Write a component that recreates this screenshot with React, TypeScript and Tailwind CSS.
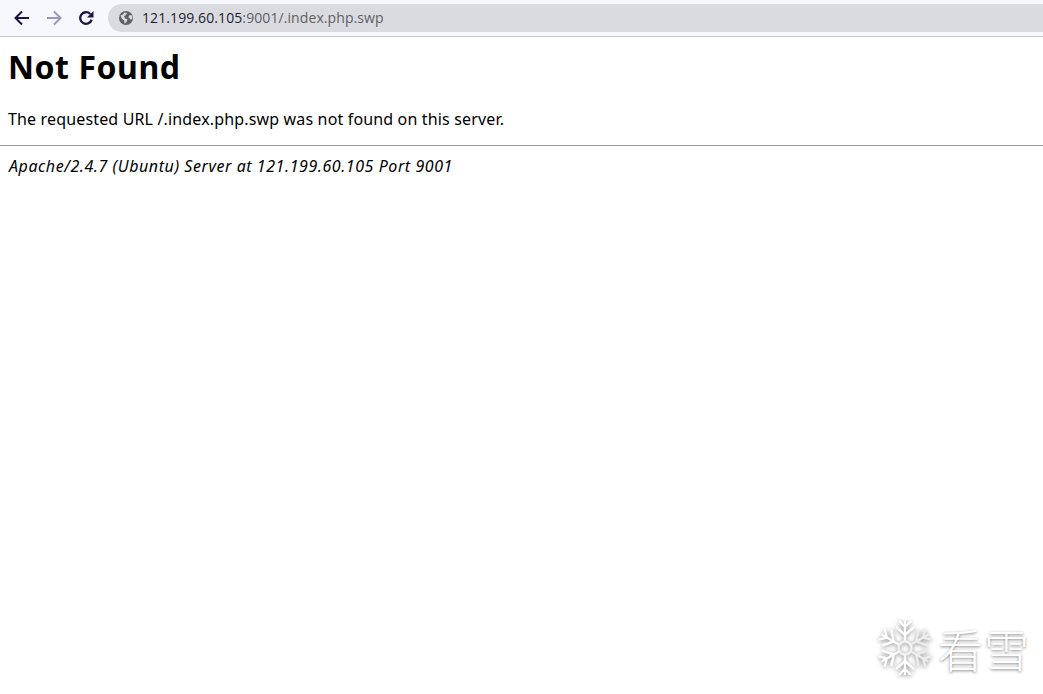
import React from "react";

function Back({ color }: { color: string }) {
  return (
    <svg width="16" height="16" viewBox="0 0 16 16" fill="none" stroke={color} strokeWidth="2">
      <path d="M15 8H2M8 1.5 1.5 8 8 14.5" />
    </svg>
  );
}

function Forward({ color }: { color: string }) {
  return (
    <svg width="16" height="16" viewBox="0 0 16 16" fill="none" stroke={color} strokeWidth="2">
      <path d="M1 8h13M8 1.5 14.5 8 8 14.5" />
    </svg>
  );
}

function Reload() {
  return (
    <svg width="16" height="16" viewBox="0 0 16 16" fill="none">
      <path d="M13.6 9.6A5.8 5.8 0 1 1 12.2 4" stroke="#1a1446" strokeWidth="2.3" />
      <path d="M15.5 1v6.6H8.9z" fill="#1a1446" />
    </svg>
  );
}

function Globe() {
  return (
    <svg width="14" height="14" viewBox="0 0 14 14">
      <circle cx="7" cy="7" r="7" fill="#5f6064" />
      <path d="M1.5 4.5 4 3.5l1.5-2L8 2 7 4 5 5l1 2.5 2.5.8-1 2.8-1.7 1.4L5 9.5 2.8 7.6z" fill="#dadbe0" />
      <path d="M10 4.5l2.6-.5.9 3-1.5 2-1-1.5-1.5-1z" fill="#dadbe0" />
    </svg>
  );
}

function Snowflake() {
  const arm = "M28 22V1M28 7l-6-6M28 7l6-6M28 15l-9-8M28 15l9-8";
  return (
    <svg width="56" height="60" viewBox="0 0 56 60" fill="none" strokeWidth="2.4" className="drop-shadow-[0_1px_2px_rgba(0,0,0,0.45)]">
      <g transform="translate(0 2)">
        {[0, 60, 120, 180, 240, 300].map((r) => (
          <path key={r} d={arm} transform={`rotate(${r} 28 28)`} stroke={r === 60 || r === 120 ? "#ececec" : "#ffffff"} />
        ))}
        <circle cx="28" cy="28" r="6.5" stroke="#f2f2f2" />
      </g>
    </svg>
  );
}

export default function App() {
  return (
    <div className="h-[694px] w-[1043px] overflow-hidden bg-white relative font-['Noto_Sans','Open_Sans',sans-serif] text-black">
      <header className="h-[37px] bg-[#f7f8fd] border-b border-[#c0c3dc] flex items-center pl-[14px] pb-[1px]">
        <div className="flex items-center gap-[16px]">
          <Back color="#1a1446" />
          <Forward color="#9a97b8" />
          <Reload />
        </div>
        <div className="ml-[14px] flex-1 h-[28px] rounded-l-full bg-[#dadbe0] flex items-center pl-[11px] gap-[9px]">
          <Globe />
          <span className="text-[14px] leading-none font-['Open_Sans','Noto_Sans',sans-serif] tracking-[0.09px] text-[#5f6064]">
            <span className="text-[#1e1e28]">121.199.60.105</span>:9001/.index.php.swp
          </span>
        </div>
      </header>

      <main className="px-[8px]">
        <h1 className="text-[32px] leading-[44px] font-bold mt-[8px] tracking-[0.55px]">Not Found</h1>
        <p className="text-[16px] leading-[22px] mt-[19px] tracking-[0.155px]">The requested URL /.index.php.swp was not found on this server.</p>
        <hr className="border-t border-[#999] -mx-[8px] mt-[15px]" />
        <address className="text-[16px] leading-[22px] italic mt-[9px] tracking-[0.56px] pl-[1px]">Apache/2.4.7 (Ubuntu) Server at 121.199.60.105 Port 9001</address>
      </main>

      <div className="absolute left-[877px] top-[618px] flex items-center gap-[5px]">
        <Snowflake />
        <span className="text-[45px] leading-none font-light text-white tracking-[1px] font-['Noto_Sans_CJK_SC',sans-serif] [text-shadow:0_1px_3px_rgba(0,0,0,0.5)]">看雪</span>
      </div>
    </div>
  );
}
